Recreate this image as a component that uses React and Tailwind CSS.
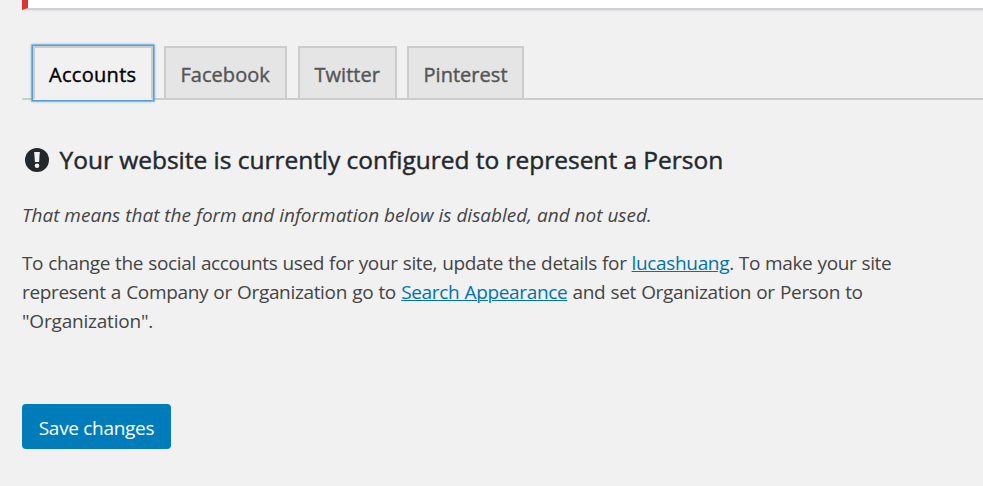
const tabs = [
  { name: 'Facebook', box: 'ml-[11px] w-[123px]' },
  { name: 'Twitter', box: 'ml-[11px] w-[99px]' },
  { name: 'Pinterest', box: 'ml-2.5 w-[117px]' },
];

function WarningIcon() {
  return (
    <svg className="mt-px h-6 w-6 shrink-0" viewBox="0 0 24 24" aria-hidden="true">
      <circle cx="12" cy="12" r="12" fill="#23282d" />
      <path d="M9.2 4h5.6l-.7 10h-4.2z" fill="#f1f1f1" stroke="none" />
      <circle cx="12" cy="17.7" r="2.3" fill="#f1f1f1" stroke="none" />
    </svg>
  );
}

export default function App() {
  return (
    <div className="h-[486px] overflow-hidden bg-[#f1f1f1] pl-[22px] font-['Open_Sans','Noto_Sans',sans-serif] text-[#444]">
      <div className="h-2.5 border-b-2 border-l-[6px] border-b-[#ccd0d4] border-l-[#dc3232] bg-white shadow-[0_1px_2px_rgba(0,0,0,0.06)]" />

      <nav className="mt-9 flex h-[54px] border-b-2 border-[#ccc] pl-2.5 text-[20px] leading-[27px] whitespace-nowrap text-[#555] [-webkit-text-stroke:0.4px_currentColor]">
        <a className="z-10 ml-px flex h-[54px] w-[120px] border-2 border-[#ccc] border-b-[#f1f1f1] bg-[#f1f1f1] pt-[13px] pl-[14px] text-black shadow-[0_0_0_1px_#5b9dd9,0_0_0_2px_rgba(91,157,217,0.5),0_0_3px_1px_rgba(30,140,190,0.8)]">
          <span className="tracking-[0.3px]">Accounts</span>
        </a>
        {tabs.map((tab) => (
          <a key={tab.name} className={`${tab.box} flex h-[52px] border-2 border-b-0 border-[#ccc] bg-[#e5e5e5] pt-[13px] pl-[14.5px]`}>
            <span className="tracking-[0.03px]">{tab.name}</span>
          </a>
        ))}
      </nav>

      <h2 className="mt-[47px] flex h-[26px] pl-[3px] text-[24.5px] leading-[26px] whitespace-nowrap text-[#23282d] [-webkit-text-stroke:0.45px_currentColor]">
        <WarningIcon />
        <span className="ml-[10.5px] tracking-[-0.02px]">Your website is currently configured to represent a Person</span>
      </h2>

      <p className="mt-7 text-[19px] leading-[29px] whitespace-nowrap italic">
        That means that the form and information below is disabled, and not used.
      </p>

      <p className="mt-[19px] text-[19px] leading-[29px] whitespace-nowrap">
        <span className="tracking-[-0.34px] [word-spacing:0.4px]">
          To change the social accounts used for your site, update the details for{' '}
          <a className="text-[#0073aa] underline decoration-1 underline-offset-1">lucashuang</a>. To make your site
        </span>
        <br />
        <span className="tracking-[-0.34px] [word-spacing:0.6px]">
          represent a Company or Organization go to{' '}
          <a className="text-[#0073aa] underline decoration-1 underline-offset-1">Search Appearance</a> and set Organization or Person to
        </span>
        <br />
        <span className="tracking-[-0.2px]">"Organization".</span>
      </p>

      <button className="mt-[68px] flex h-[45px] w-[149px] items-center justify-center rounded-[4px] bg-[#007cba] pt-[3px] text-[19px] leading-[29px] whitespace-nowrap text-white">
        <span className="tracking-[-0.3px]">Save changes</span>
      </button>
    </div>
  );
}
